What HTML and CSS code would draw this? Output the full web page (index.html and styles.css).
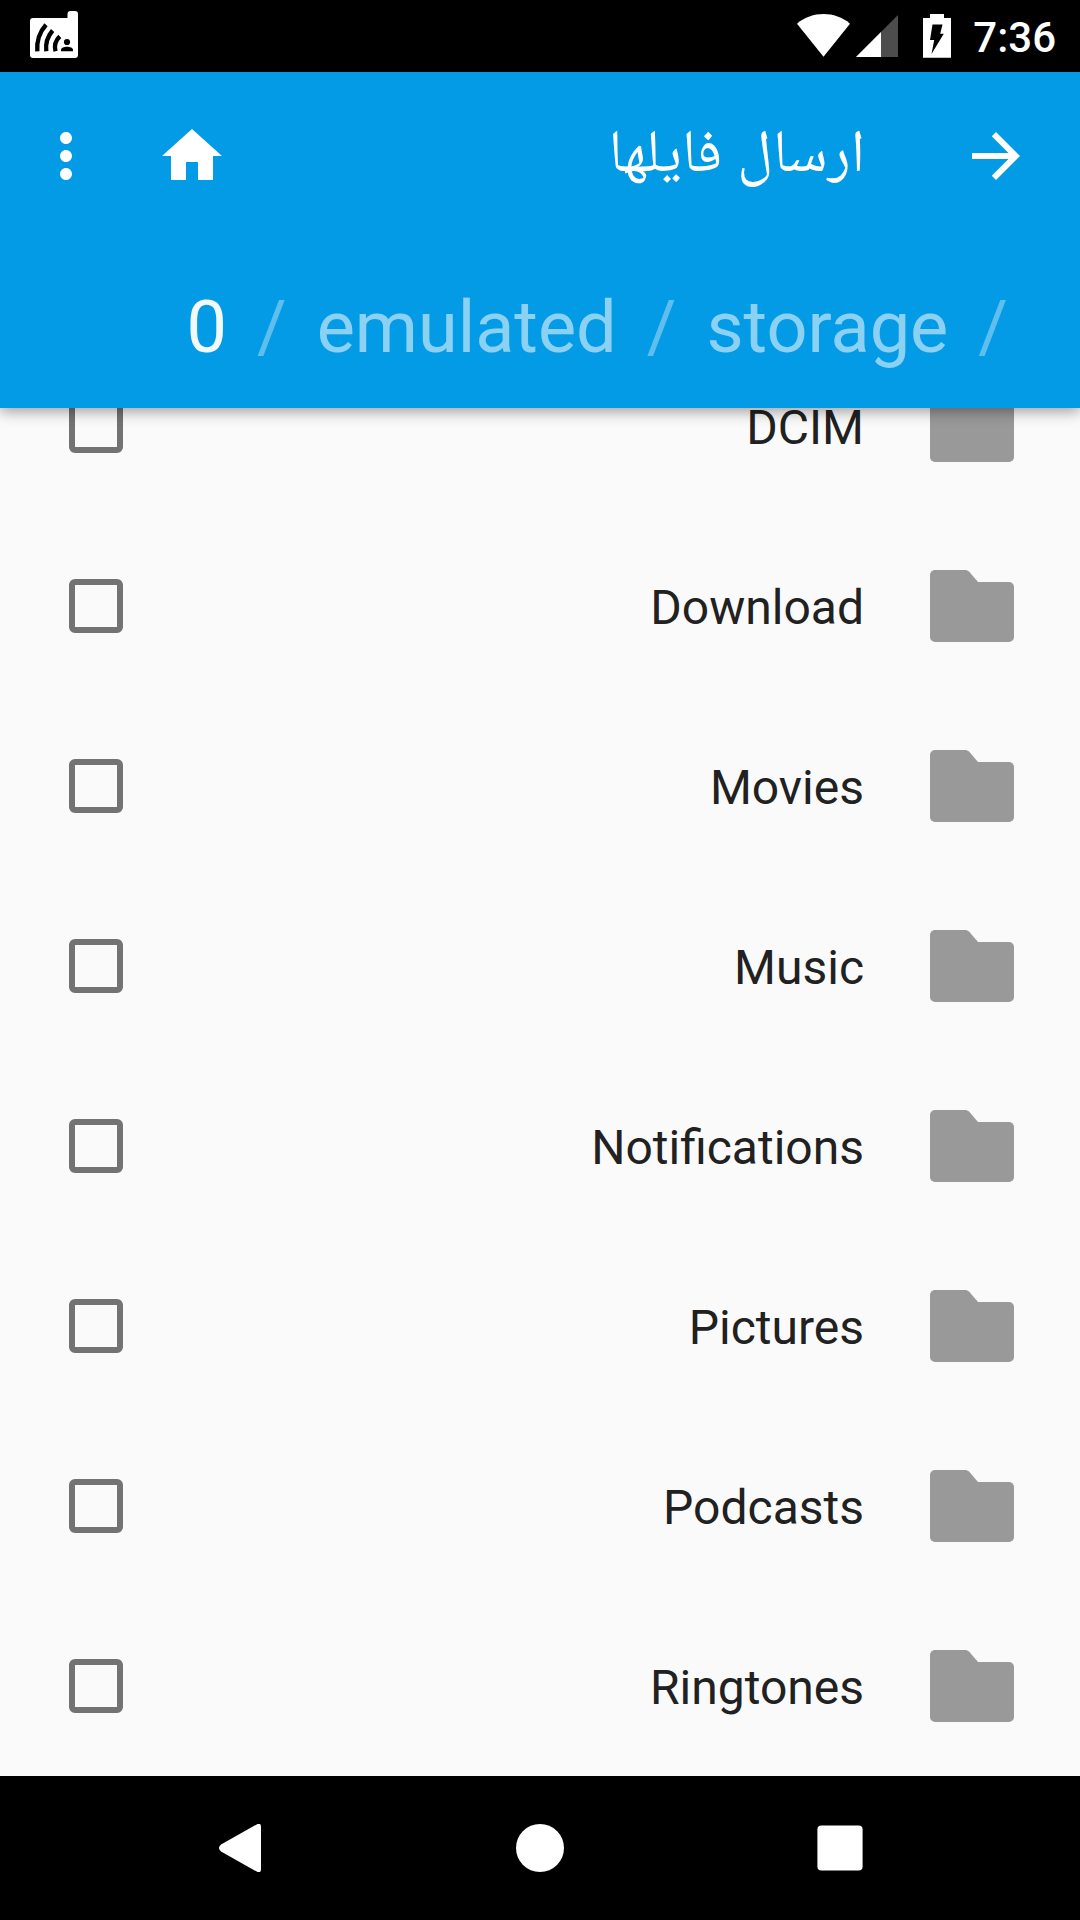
FILE: index.html
```html
<!DOCTYPE html>
<html lang="fa" dir="rtl">
<head>
    <meta charset="UTF-8">
    <meta name="viewport" content="width=device-width, initial-scale=1.0">
    <title>ارسال فایلها</title>
    <link rel="stylesheet" href="styles.css">
</head>
<body>
    <div class="screen">
        <div class="status-bar" dir="ltr">
            <svg class="app-icon" width="48" height="48" viewBox="30 11 48 48">
                <path fill="#fff" d="M33 18h34.500v-4a3 3 0 0 1 3-3h4.500a3 3 0 0 1 3 3v41a3 3 0 0 1-3 3H33a3 3 0 0 1-3-3V21a3 3 0 0 1 3-3z"/>
                <path fill="none" stroke="#000" stroke-width="4.300" d="M37.300 51.300C36.500 41 39.500 32 46 24.700M46.300 51.300C45.300 43.500 47.500 36.500 52.600 30.500M55.500 51.300C54 45.500 55.500 40.500 59.800 36.400"/>
                <circle cx="67" cy="42" r="3.100"/>
                <path d="M61 51.200v-1.200c0-4.200 12-4.200 12 0v1.200z"/>
            </svg>
            <div class="status-icons">
                <svg class="wifi" width="54" height="43" viewBox="797 14 54 43">
                    <path fill="#fff" d="M797 23.700C812 10.900 835 10.900 850 23.700L823.500 56.700z"/>
                </svg>
                <svg class="signal" width="42" height="43" viewBox="856 14 42 43">
                    <path fill="#4d4d4d" d="M856 57L898 15V57z"/>
                    <path fill="#fff" d="M856 57L881 32V57z"/>
                </svg>
                <svg class="battery" width="28" height="44" viewBox="923 14 28 44">
                    <path fill="#fff" d="M930 14h14v4h7v39.700h-28V18h7z"/>
                    <path d="M932.500 24.500h10l-2.300 9.200h3.600L931.500 54l2.700-14H930z"/>
                </svg>
                <span class="time">7:36</span>
            </div>
        </div>

        <div class="header">
            <div class="toolbar">
                <svg class="icon" viewBox="0 0 24 24"><path d="M12 4l-1.410 1.410L16.170 11H4v2h12.170l-5.580 5.590L12 20l8-8z"/></svg>
                <h1>ارسال فایلها</h1>
                <svg class="icon home" viewBox="0 0 24 24"><path d="M10 20v-6h4v6h5v-8h3L12 3 2 12h3v8z"/></svg>
                <svg class="icon" viewBox="0 0 24 24"><path d="M12 8c1.100 0 2-.9 2-2s-.9-2-2-2-2 .9-2 2 .9 2 2 2zm0 2c-1.100 0-2 .9-2 2s.9 2 2 2 2-.9 2-2-.9-2-2-2zm0 6c-1.100 0-2 .9-2 2s.9 2 2 2 2-.9 2-2-.9-2-2-2z"/></svg>
            </div>
            <div class="path">
                <span class="slash" dir="ltr">/</span>
                <span class="dir">storage</span>
                <span class="slash" dir="ltr">/</span>
                <span class="dir">emulated</span>
                <span class="slash" dir="ltr">/</span>
                <span class="dir current">0</span>
            </div>
        </div>

        <svg width="0" height="0" class="defs">
            <symbol id="folder" viewBox="0 0 84 72">
                <path d="M5 0h30.500q2 0 3.500 1.500L48 12h31a5 5 0 0 1 5 5v50a5 5 0 0 1-5 5H5a5 5 0 0 1-5-5V5a5 5 0 0 1 5-5z"/>
            </symbol>
        </svg>

        <div class="list">
            <div class="row"><svg class="folder"><use href="#folder"/></svg><span class="name">DCIM</span><span class="checkbox"></span></div>
            <div class="row"><svg class="folder"><use href="#folder"/></svg><span class="name">Download</span><span class="checkbox"></span></div>
            <div class="row"><svg class="folder"><use href="#folder"/></svg><span class="name">Movies</span><span class="checkbox"></span></div>
            <div class="row"><svg class="folder"><use href="#folder"/></svg><span class="name">Music</span><span class="checkbox"></span></div>
            <div class="row"><svg class="folder"><use href="#folder"/></svg><span class="name">Notifications</span><span class="checkbox"></span></div>
            <div class="row"><svg class="folder"><use href="#folder"/></svg><span class="name">Pictures</span><span class="checkbox"></span></div>
            <div class="row"><svg class="folder"><use href="#folder"/></svg><span class="name">Podcasts</span><span class="checkbox"></span></div>
            <div class="row"><svg class="folder"><use href="#folder"/></svg><span class="name">Ringtones</span><span class="checkbox"></span></div>
        </div>

        <div class="nav-bar" dir="ltr">
            <svg width="48" height="48" viewBox="0 0 48 48"><path d="M40.300.7Q45-2 45 3v42q0 5-4.700 2.300L5 27.500q-4-3.500 0-7z"/></svg>
            <svg width="48" height="48" viewBox="0 0 48 48"><circle cx="24" cy="24" r="24"/></svg>
            <svg width="48" height="48" viewBox="0 0 48 48"><rect x="1.400" y="1.400" width="45.200" height="45.200" rx="4"/></svg>
        </div>
    </div>
</body>
</html>
```
FILE: styles.css
```css
body{
    margin: 0;
    background-color: #000;
}
.screen{
    width: 1080px;
    height: 1920px;
    display: flex;
    flex-direction: column;
    overflow: hidden;
    background-color: #fafafa;
    font-family: Roboto, "Noto Naskh Arabic", "Noto Sans Arabic", "Noto Sans", "DejaVu Sans", sans-serif;
}
svg{
    display: block;
    flex-shrink: 0;
}
.status-bar{
    height: 72px;
    flex-shrink: 0;
    box-sizing: border-box;
    padding: 0 24px 0 30px;
    display: flex;
    justify-content: space-between;
    align-items: center;
    background-color: #000;
    color: white;
}
.app-icon{
    margin-bottom: 2px;
}
.status-icons{
    display: flex;
    align-items: center;
}
.wifi{
    margin-bottom: 1px;
}
.signal{
    margin-left: 5px;
    margin-bottom: 1px;
}
.battery{
    margin-left: 25px;
}
.time{
    margin-left: 22px;
    font-size: 42px;
    font-weight: 500;
    line-height: 72px;
    padding-top: 4px;
}
.header{
    height: 336px;
    flex-shrink: 0;
    position: relative;
    background-color: #039be5;
    box-shadow: 0 3px 14px rgba(0, 0, 0, 0.4);
    color: white;
}
.toolbar{
    height: 168px;
    padding: 0 48px 0 30px;
    display: flex;
    align-items: center;
}
.toolbar h1{
    flex: 1;
    margin: 0 95px 10px 0;
    font-size: 60px;
    font-weight: 400;
    line-height: 90px;
}
.icon{
    width: 72px;
    height: 72px;
    fill: white;
}
.home{
    margin-left: 54px;
}
.path{
    height: 160px;
    padding-top: 8px;
    padding-right: 72px;
    display: flex;
    align-items: center;
    font-size: 72px;
    line-height: 84px;
}
.dir{
    margin: 0 30px;
    opacity: 0.54;
}
.current{
    opacity: 0.95;
}
.slash{
    opacity: 0.36;
}
.defs{
    position: absolute;
}
.list{
    flex: 1;
    display: flex;
    flex-direction: column;
    justify-content: flex-end;
    min-height: 0;
}
.row{
    height: 180px;
    flex-shrink: 0;
    box-sizing: border-box;
    padding: 0 66px 0 69px;
    display: flex;
    align-items: center;
}
.folder{
    width: 84px;
    height: 72px;
    fill: #999;
}
.name{
    flex: 1;
    margin-right: 66px;
    padding-top: 2px;
    font-size: 48px;
    color: #212121;
}
.checkbox{
    width: 54px;
    height: 54px;
    box-sizing: border-box;
    border: 6px solid #737373;
    border-radius: 6px;
}
.nav-bar{
    height: 144px;
    flex-shrink: 0;
    box-sizing: border-box;
    padding: 0 216px;
    display: flex;
    justify-content: space-between;
    align-items: center;
    background-color: #000;
    fill: white;
}
```
